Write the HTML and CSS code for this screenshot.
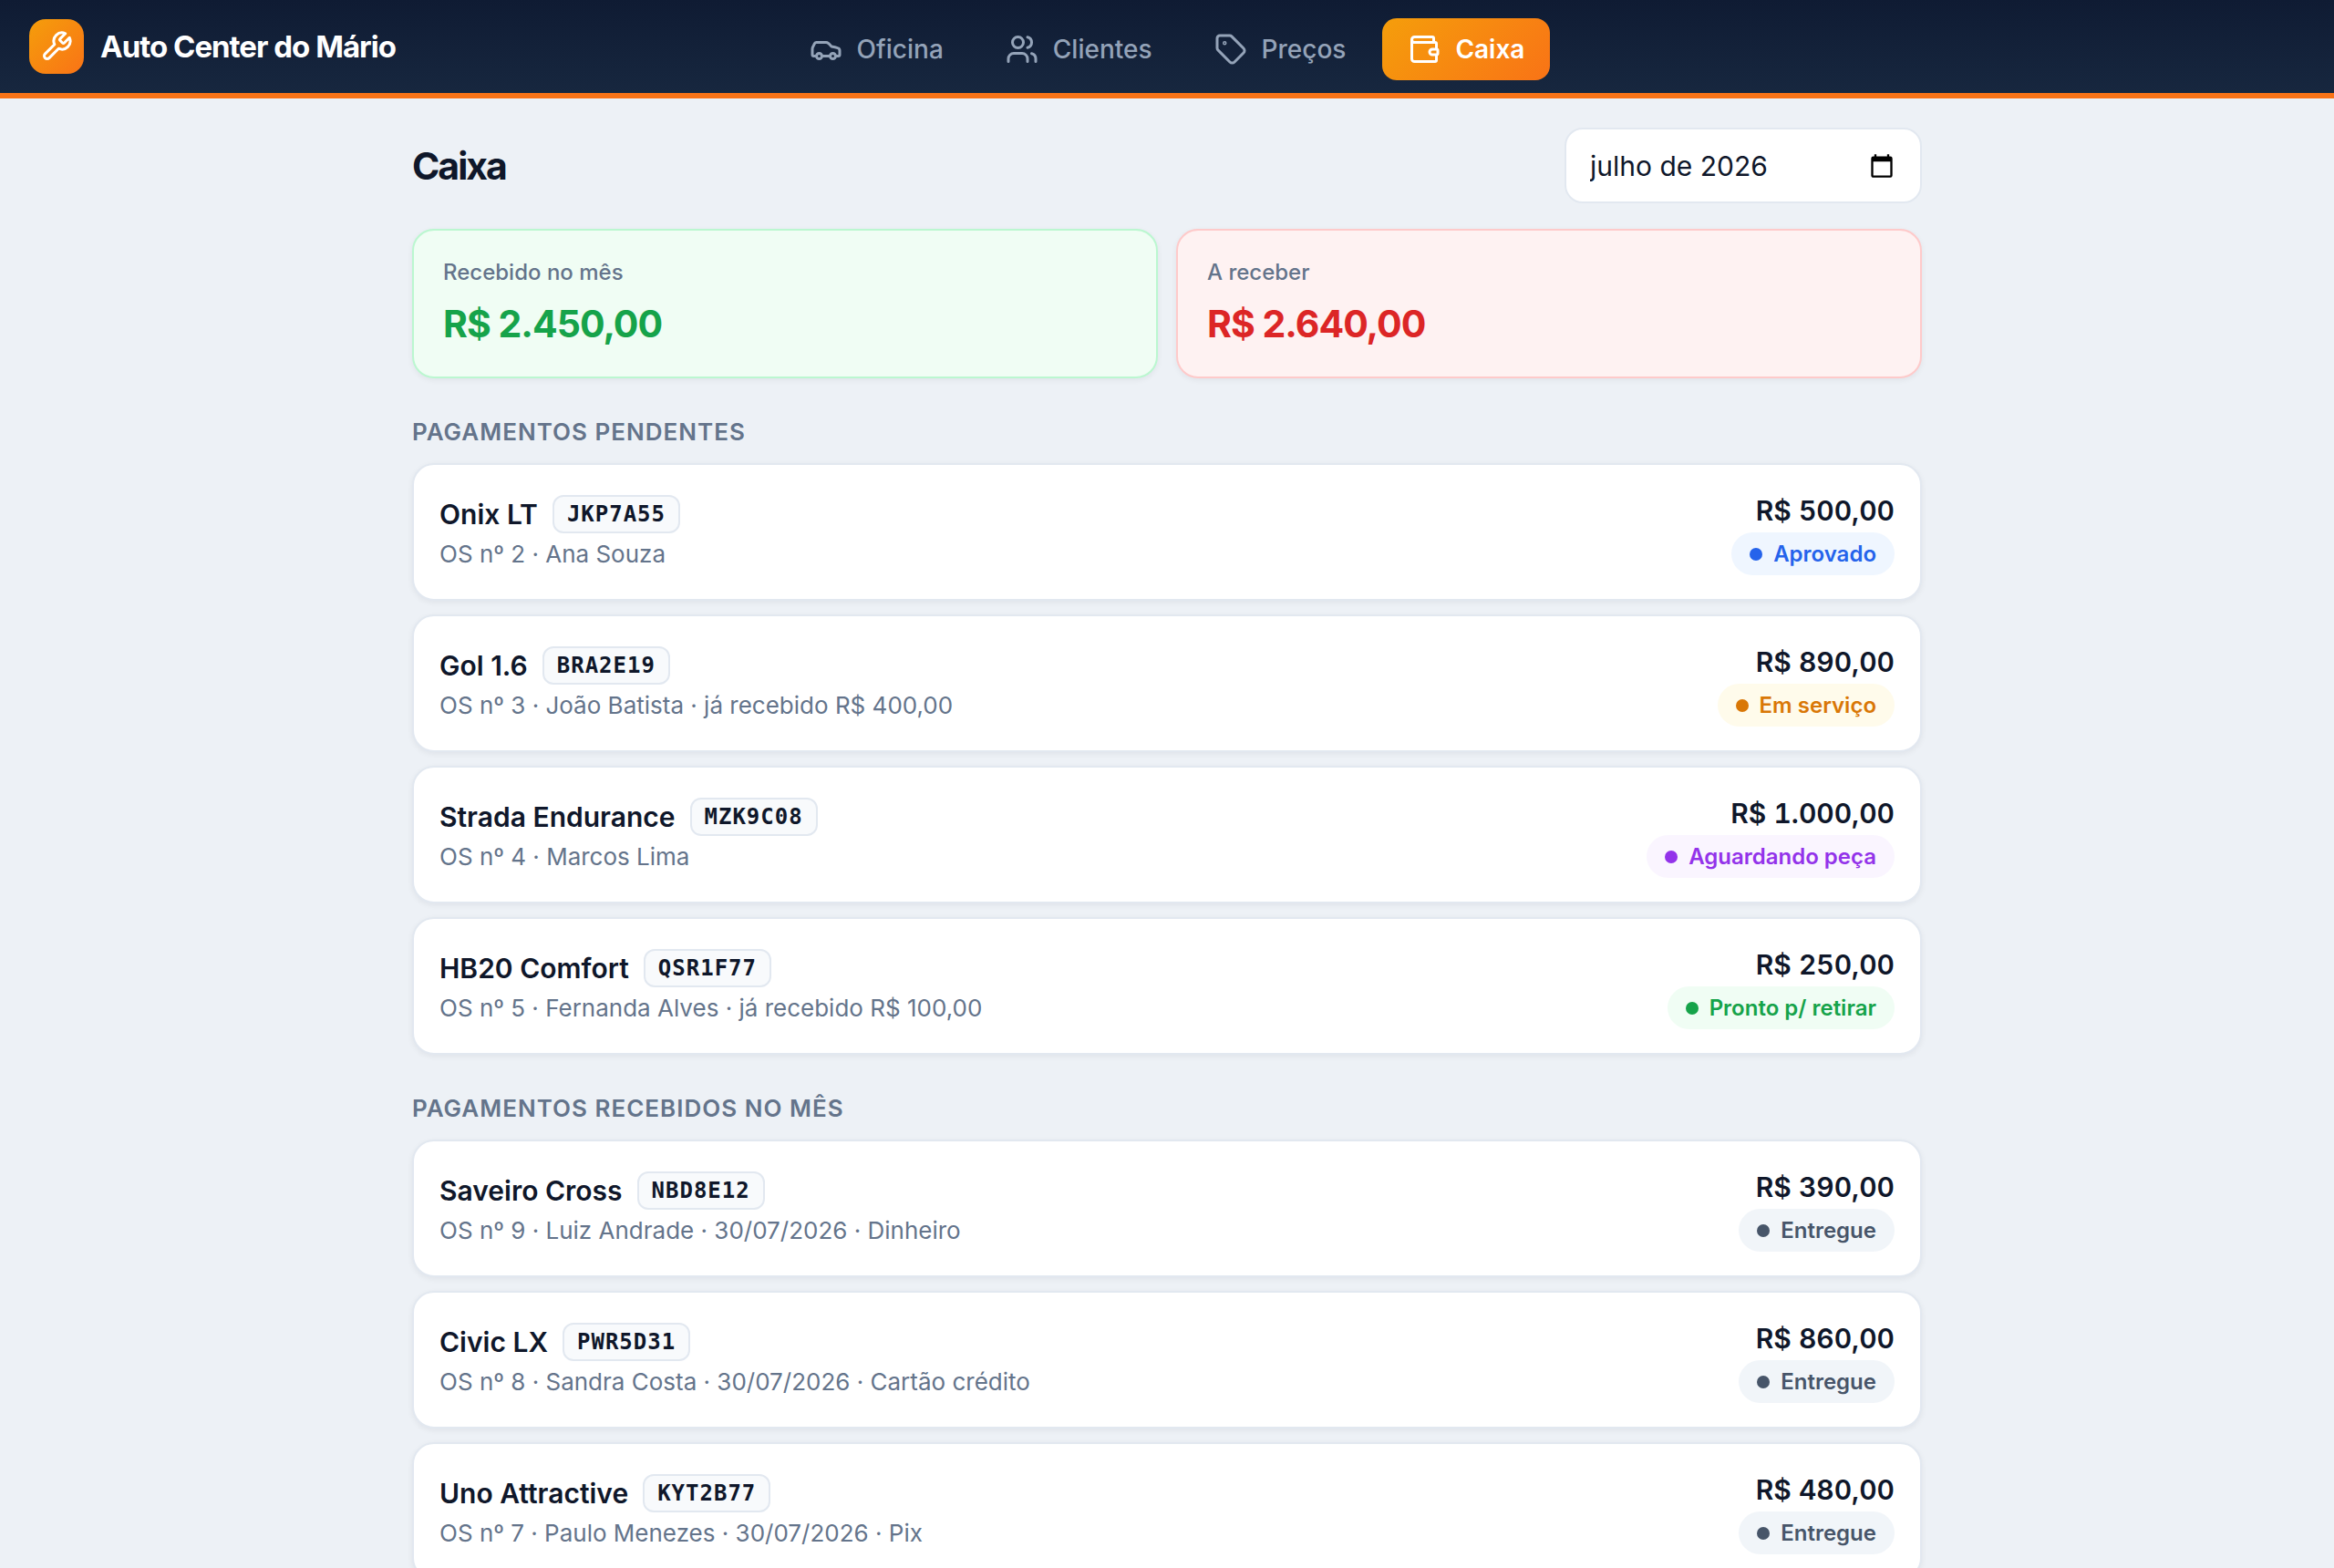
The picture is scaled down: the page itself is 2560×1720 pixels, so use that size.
FILE: index.html
```html
<!DOCTYPE html>
<html lang="pt-BR">
<head>
  <meta charset="UTF-8">
  <meta name="viewport" content="width=device-width, initial-scale=1">
  <title>Caixa - Auto Center do Mário</title>
  <link rel="stylesheet" href="styles.css">
</head>
<body>
  <header class="topbar">
    <a class="brand" href="#">
      <span class="brand-icon">
        <svg viewBox="0 0 24 24"><path d="M14.7 6.3a1 1 0 0 0 0 1.4l1.6 1.6a1 1 0 0 0 1.4 0l3.77-3.77a6 6 0 0 1-7.94 7.94l-6.91 6.91a2.12 2.12 0 0 1-3-3l6.91-6.91a6 6 0 0 1 7.94-7.94l-3.76 3.76z"/></svg>
      </span>
      <span class="brand-name">Auto Center do Mário</span>
    </a>
    <nav class="nav">
      <a href="#oficina">
        <svg viewBox="0 0 24 24"><path d="M19 17h2c.6 0 1-.4 1-1v-3c0-.9-.7-1.7-1.5-1.9C18.7 10.6 16 10 16 10s-1.3-1.4-2.2-2.3c-.5-.4-1.1-.7-1.8-.7H5c-.6 0-1.1.4-1.4.9l-1.4 2.9A3.7 3.7 0 0 0 2 12v4c0 .6.4 1 1 1h2M9 17h6"/><circle cx="7" cy="17" r="2"/><circle cx="17" cy="17" r="2"/></svg>
        Oficina
      </a>
      <a href="#clientes">
        <svg viewBox="0 0 24 24"><circle cx="9" cy="7" r="4"/><path d="M2 21v-2a4 4 0 0 1 4-4h6a4 4 0 0 1 4 4v2M16 3.13a4 4 0 0 1 0 7.75M22 21v-2a4 4 0 0 0-3-3.87"/></svg>
        Clientes
      </a>
      <a href="#precos">
        <svg viewBox="0 0 24 24"><path d="M12.6 2.6A2 2 0 0 0 11.2 2H4a2 2 0 0 0-2 2v7.2a2 2 0 0 0 .6 1.4l8.7 8.7a2.4 2.4 0 0 0 3.4 0l6.6-6.6a2.4 2.4 0 0 0 0-3.4z"/><circle cx="7.5" cy="7.5" r=".5"/></svg>
        Preços
      </a>
      <a href="#caixa" class="active">
        <svg viewBox="0 0 24 24"><path d="M19 7V4a1 1 0 0 0-1-1H5a2 2 0 0 0 0 4h15a1 1 0 0 1 1 1v4h-3a2 2 0 0 0 0 4h3a1 1 0 0 0 1-1v-2a1 1 0 0 0-1-1M3 5v14a2 2 0 0 0 2 2h15a1 1 0 0 0 1-1v-4"/></svg>
        Caixa
      </a>
    </nav>
  </header>

  <main class="page">
    <div class="page-head">
      <h1>Caixa</h1>
      <div class="month">
        <input type="text" id="mes" value="julho de 2026" aria-label="Mês">
        <button type="button" aria-label="Abrir calendário">
          <svg viewBox="0 0 24 24"><path d="M20 3h-1V1h-2v2H7V1H5v2H4a2 2 0 0 0-2 2v16c0 1.1.9 2 2 2h16a2 2 0 0 0 2-2V5a2 2 0 0 0-2-2zm0 18H4V8h16z"/></svg>
        </button>
      </div>
    </div>

    <div class="totals">
      <div class="total received">
        <span>Recebido no mês</span>
        <strong>R$ 2.450,00</strong>
      </div>
      <div class="total due">
        <span>A receber</span>
        <strong>R$ 2.640,00</strong>
      </div>
    </div>

    <h2>Pagamentos pendentes</h2>
    <ul class="list">
      <li class="card">
        <div>
          <div class="car">Onix LT <span class="plate">JKP7A55</span></div>
          <div class="info">OS nº 2 · Ana Souza</div>
        </div>
        <div class="side">
          <div class="amount">R$ 500,00</div>
          <span class="badge blue">Aprovado</span>
        </div>
      </li>
      <li class="card">
        <div>
          <div class="car">Gol 1.6 <span class="plate">BRA2E19</span></div>
          <div class="info">OS nº 3 · João Batista · já recebido R$ 400,00</div>
        </div>
        <div class="side">
          <div class="amount">R$ 890,00</div>
          <span class="badge amber">Em serviço</span>
        </div>
      </li>
      <li class="card">
        <div>
          <div class="car">Strada Endurance <span class="plate">MZK9C08</span></div>
          <div class="info">OS nº 4 · Marcos Lima</div>
        </div>
        <div class="side">
          <div class="amount">R$ 1.000,00</div>
          <span class="badge purple">Aguardando peça</span>
        </div>
      </li>
      <li class="card">
        <div>
          <div class="car">HB20 Comfort <span class="plate">QSR1F77</span></div>
          <div class="info">OS nº 5 · Fernanda Alves · já recebido R$ 100,00</div>
        </div>
        <div class="side">
          <div class="amount">R$ 250,00</div>
          <span class="badge green">Pronto p/ retirar</span>
        </div>
      </li>
    </ul>

    <h2>Pagamentos recebidos no mês</h2>
    <ul class="list">
      <li class="card">
        <div>
          <div class="car">Saveiro Cross <span class="plate">NBD8E12</span></div>
          <div class="info">OS nº 9 · Luiz Andrade · 30/07/2026 · Dinheiro</div>
        </div>
        <div class="side">
          <div class="amount">R$ 390,00</div>
          <span class="badge gray">Entregue</span>
        </div>
      </li>
      <li class="card">
        <div>
          <div class="car">Civic LX <span class="plate">PWR5D31</span></div>
          <div class="info">OS nº 8 · Sandra Costa · 30/07/2026 · Cartão crédito</div>
        </div>
        <div class="side">
          <div class="amount">R$ 860,00</div>
          <span class="badge gray">Entregue</span>
        </div>
      </li>
      <li class="card">
        <div>
          <div class="car">Uno Attractive <span class="plate">KYT2B77</span></div>
          <div class="info">OS nº 7 · Paulo Menezes · 30/07/2026 · Pix</div>
        </div>
        <div class="side">
          <div class="amount">R$ 480,00</div>
          <span class="badge gray">Entregue</span>
        </div>
      </li>
    </ul>
  </main>
</body>
</html>
```
FILE: styles.css
```css
* {
  box-sizing: border-box;
}
body {
  margin: 0;
  background: #edf1f6;
  color: #0f172a;
  font-family: Inter, "Liberation Sans", sans-serif;
  font-size: 30px;
}
svg {
  fill: none;
  stroke: currentColor;
  stroke-width: 2;
  stroke-linecap: round;
  stroke-linejoin: round;
}

/* top bar */
.topbar {
  display: grid;
  grid-template-columns: 1fr auto 1fr;
  align-items: center;
  height: 108px;
  padding: 0 32px;
  background: linear-gradient(#0f1b33, #17273f);
  border-bottom: 6px solid #f97316;
}
.brand {
  display: flex;
  align-items: center;
  gap: 18px;
  color: #fff;
  text-decoration: none;
}
.brand-icon {
  display: flex;
  align-items: center;
  justify-content: center;
  width: 60px;
  height: 60px;
  border-radius: 18px;
  background: linear-gradient(135deg, #f59e0b, #f97316);
}
.brand-icon svg {
  width: 36px;
  height: 36px;
}
.brand-name {
  font-size: 33px;
  font-weight: 700;
  letter-spacing: -1px;
}
.nav {
  display: flex;
  gap: 12px;
  padding-top: 6px;
}
.nav a {
  display: flex;
  align-items: center;
  gap: 16px;
  height: 68px;
  padding: 0 28px;
  border-radius: 16px;
  color: #94a3b8;
  font-size: 28px;
  font-weight: 500;
  text-decoration: none;
}
.nav svg {
  width: 36px;
  height: 36px;
}
.nav .active {
  background: linear-gradient(135deg, #f59e0b, #f97316);
  color: #fff;
  font-weight: 600;
}

/* page */
.page {
  max-width: 1720px;
  margin: 0 auto;
  padding: 32px;
}
.page-head {
  display: flex;
  align-items: center;
  justify-content: space-between;
  margin-bottom: 28px;
}
h1 {
  margin: 0;
  font-size: 41px;
  font-weight: 700;
  letter-spacing: -2px;
}
.month {
  display: flex;
  align-items: center;
  width: 392px;
  height: 83px;
  padding: 0 28px 0 26px;
  background: #fff;
  border: 2px solid #e2e8f0;
  border-radius: 20px;
}
.month input {
  flex: 1;
  min-width: 0;
  padding: 0;
  border: 0;
  outline: 0;
  background: none;
  color: inherit;
  font: inherit;
}
.month button {
  display: flex;
  padding: 0;
  border: 0;
  background: none;
  color: #000;
}
.month svg {
  width: 28px;
  height: 28px;
  fill: currentColor;
  stroke: none;
}
.totals {
  display: grid;
  grid-template-columns: 1fr 1fr;
  gap: 20px;
}
.total {
  padding: 32px;
  border: 2px solid;
  border-radius: 24px;
  box-shadow: 0 2px 6px rgba(15, 23, 42, 0.06);
}
.total span,
.total strong {
  display: block;
}
.total span {
  color: #64748b;
  font-size: 24px;
  font-weight: 500;
  line-height: 28px;
}
.total strong {
  margin-top: 16px;
  font-size: 41px;
  font-weight: 700;
  line-height: 52px;
  letter-spacing: -1px;
}
.received {
  background: #f0fdf4;
  border-color: #bbf7d0;
}
.received strong {
  color: #16a34a;
}
.due {
  background: #fef2f2;
  border-color: #fecaca;
}
.due strong {
  color: #dc2626;
}
h2 {
  margin: 43px 0 19px;
  color: #64748b;
  font-size: 26px;
  font-weight: 600;
  line-height: 31px;
  letter-spacing: 1px;
  text-transform: uppercase;
}

/* payments */
.list {
  display: flex;
  flex-direction: column;
  gap: 15px;
  margin: 0;
  padding: 0;
  list-style: none;
}
.card {
  display: flex;
  align-items: center;
  justify-content: space-between;
  padding: 30px 28px 26px;
  background: #fff;
  border: 2px solid #e2e8f0;
  border-radius: 24px;
  box-shadow: 0 2px 6px rgba(15, 23, 42, 0.06);
}
.car {
  display: flex;
  align-items: center;
  gap: 16px;
  font-weight: 600;
  line-height: 44px;
}
.plate {
  padding: 0 14px;
  background: #f8fafc;
  border: 2px solid #e2e8f0;
  border-radius: 12px;
  font-family: "DejaVu Sans Mono", monospace;
  font-size: 24px;
  font-weight: 700;
  line-height: 38px;
  letter-spacing: 1px;
}
.info {
  color: #64748b;
  font-size: 26px;
  line-height: 44px;
}
.side {
  display: flex;
  flex-direction: column;
  align-items: flex-end;
  gap: 4px;
}
.amount {
  font-weight: 600;
  line-height: 40px;
  font-variant-numeric: tabular-nums;
}
.badge {
  display: flex;
  align-items: center;
  gap: 12px;
  padding: 0 20px;
  border-radius: 24px;
  font-size: 24px;
  font-weight: 600;
  line-height: 47px;
}
.badge::before {
  content: "";
  width: 14px;
  height: 14px;
  border-radius: 50%;
  background: currentColor;
}
.blue {
  background: #eff6ff;
  color: #2563eb;
}
.amber {
  background: #fffbeb;
  color: #d97706;
}
.purple {
  background: #faf5ff;
  color: #9333ea;
}
.green {
  background: #f0fdf4;
  color: #16a34a;
}
.gray {
  background: #f1f5f9;
  color: #475569;
}
```
